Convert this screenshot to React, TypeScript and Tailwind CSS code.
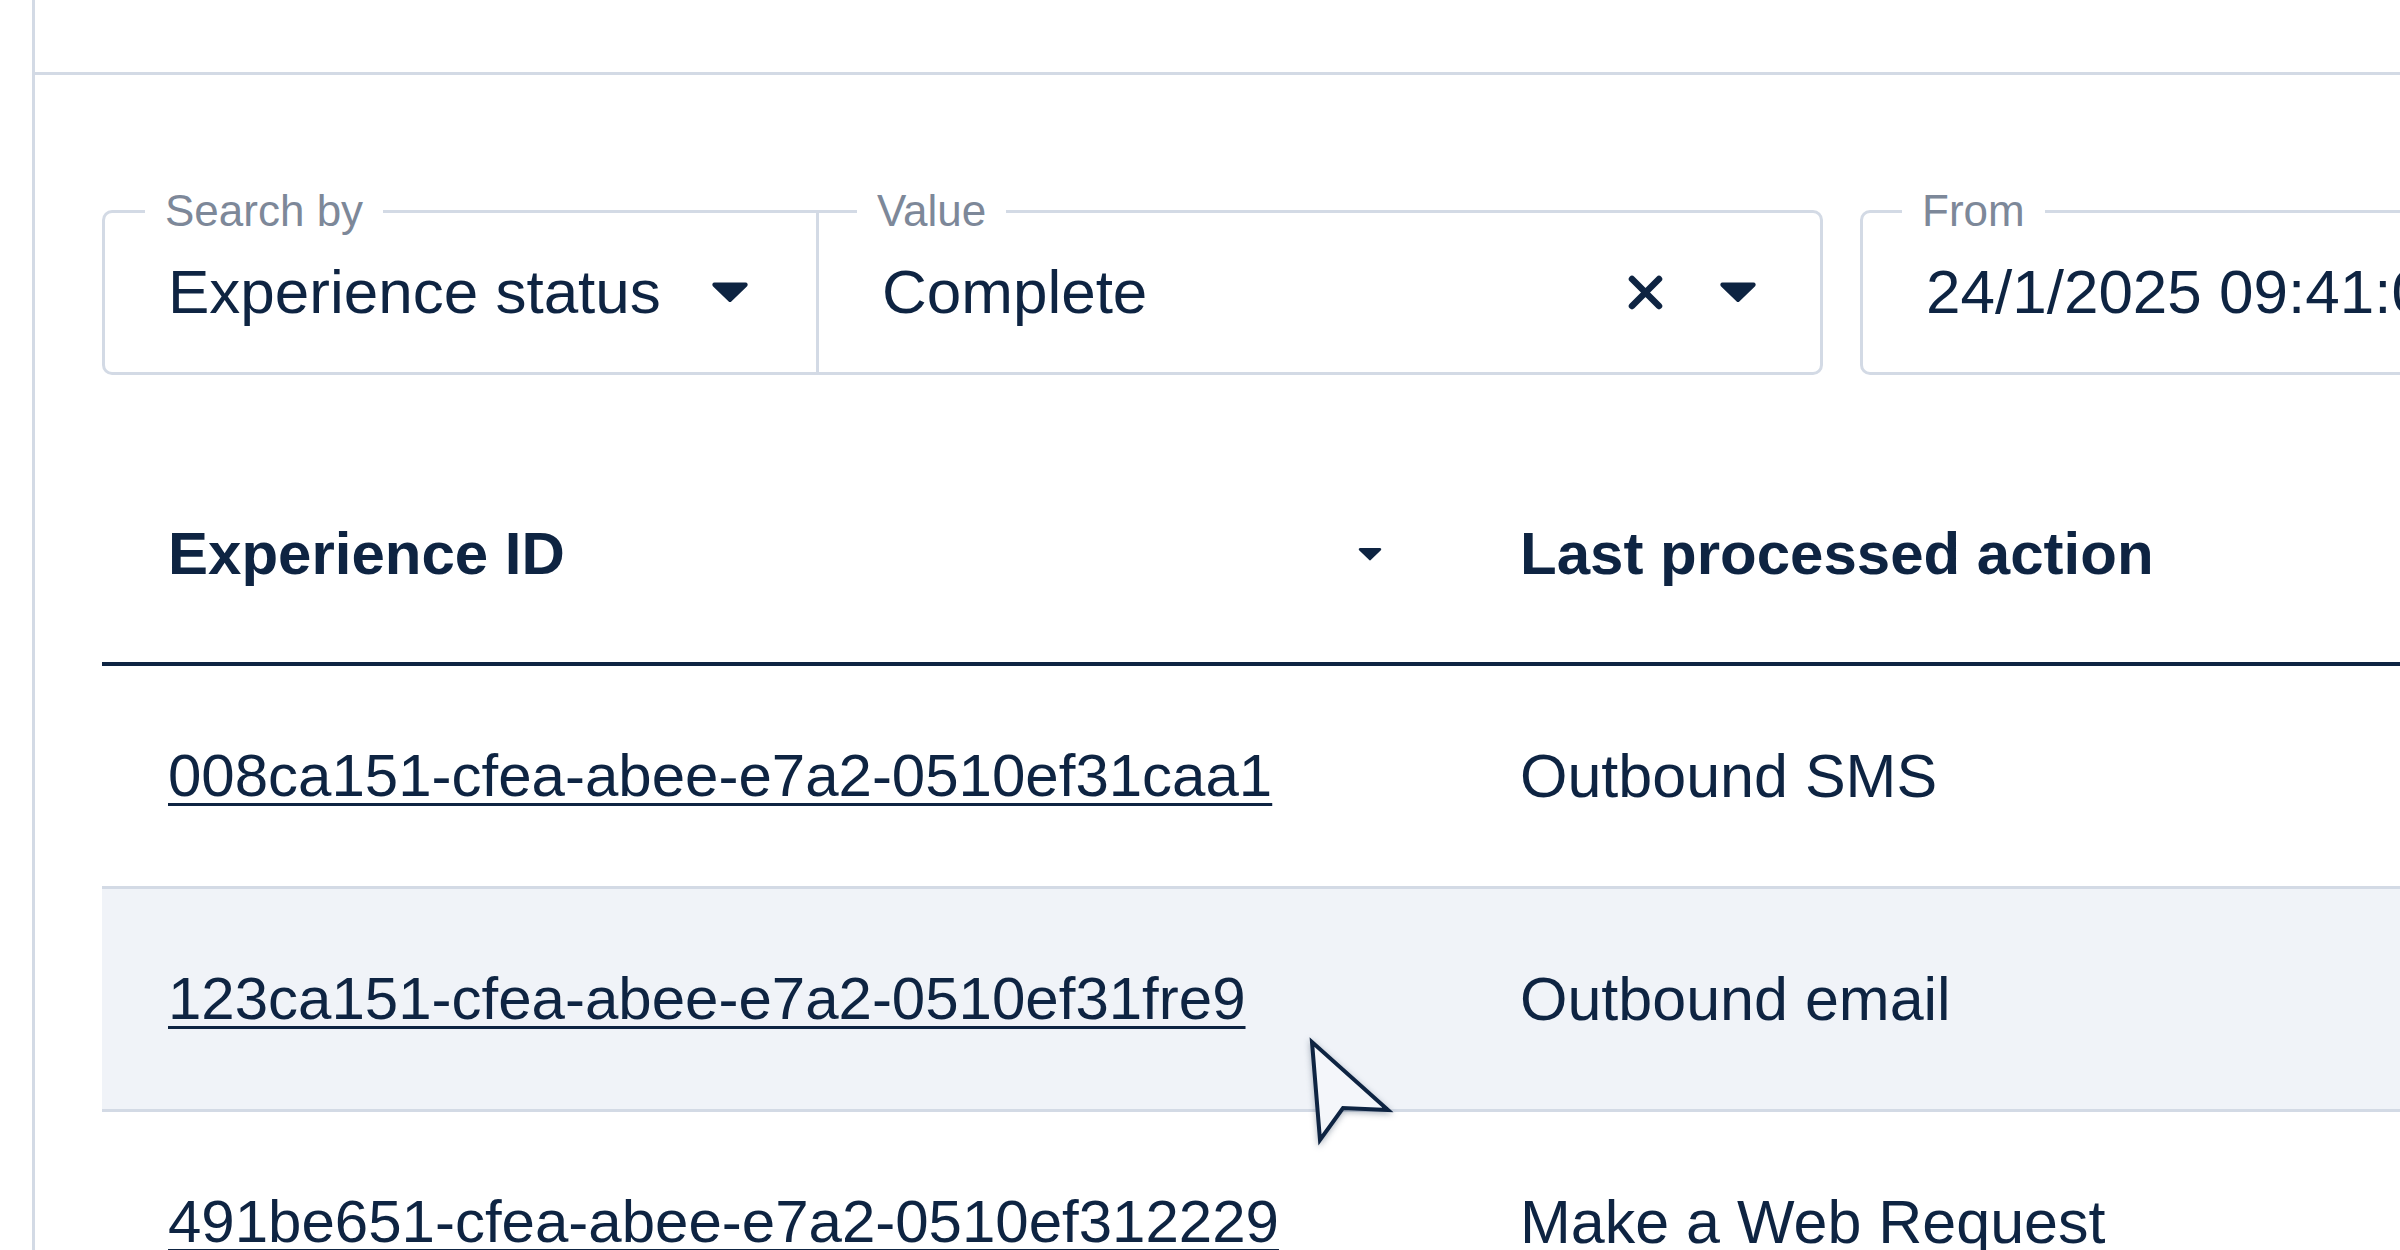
import React from 'react';

const rows = [
  { id: '008ca151-cfea-abee-e7a2-0510ef31caa1', action: 'Outbound SMS', hovered: false },
  { id: '123ca151-cfea-abee-e7a2-0510ef31fre9', action: 'Outbound email', hovered: true },
  { id: '491be651-cfea-abee-e7a2-0510ef312229', action: 'Make a Web Request', hovered: false },
];

function Caret({ className = '' }: { className?: string }) {
  return (
    <svg viewBox="0 0 38 22" className={className} fill="currentColor">
      <path d="M3.5 1.5 H34.5 a2.2 2.2 0 0 1 1.6 3.7 L20.6 20.2 a2.2 2.2 0 0 1 -3.2 0 L1.9 5.2 A2.2 2.2 0 0 1 3.5 1.5 Z" />
    </svg>
  );
}

function ClearIcon() {
  return (
    <svg viewBox="0 0 37 37" className="h-[37px] w-[37px]" fill="none" stroke="currentColor" strokeWidth={6.5} strokeLinecap="round">
      <path d="M5 5 L32 32 M32 5 L5 32" />
    </svg>
  );
}

function Cursor() {
  return (
    <svg
      viewBox="0 0 100 120"
      className="absolute left-[1300px] top-[1030px] h-[120px] w-[100px] drop-shadow-[0_2px_3px_rgba(14,36,66,0.35)]"
    >
      <path
        d="M12 12 L20 110 L43 78 L88 80 Z"
        fill="#f4f6fa"
        stroke="#0e2442"
        strokeWidth={4}
        strokeLinejoin="miter"
      />
    </svg>
  );
}

export default function App() {
  return (
    <div className="relative h-[1250px] w-[2400px] overflow-hidden bg-white font-['Liberation_Sans',Arial,sans-serif] text-[#0e2442]">
      <div className="ml-[32px] h-full border-l-[3px] border-[#d3dae5]">
        <div className="h-[75px] border-b-[3px] border-[#d3dae5]" />

        <div className="pl-[67px]">
          {/* filters */}
          <div className="mt-[116px] flex">
            <fieldset className="w-[714px] shrink-0 rounded-l-[10px] border-[3px] border-r-0 border-[#d3dae5]">
              <legend className="ml-[40px] px-[20px] text-[44px] leading-[40px] text-[#7d8899]">Search by</legend>
              <div className="flex items-center justify-between pb-[50px] pl-[63px] pr-[66px] pt-[31px]">
                <span className="text-[62px] leading-[60px]">Experience status</span>
                <Caret className="h-[22px] w-[40px]" />
              </div>
            </fieldset>

            <fieldset className="w-[1007px] shrink-0 rounded-r-[10px] border-[3px] border-[#d3dae5]">
              <legend className="ml-[38px] px-[20px] text-[44px] leading-[40px] text-[#7d8899]">Value</legend>
              <div className="flex items-center justify-between pb-[50px] pl-[63px] pr-[63px] pt-[31px]">
                <span className="text-[62px] leading-[60px]">Complete</span>
                <div className="flex items-center gap-[55px]">
                  <ClearIcon />
                  <Caret className="h-[22px] w-[38px]" />
                </div>
              </div>
            </fieldset>

            <fieldset className="ml-[37px] w-[800px] shrink-0 rounded-[10px] border-[3px] border-[#d3dae5]">
              <legend className="ml-[39px] px-[20px] text-[44px] leading-[40px] text-[#7d8899]">From</legend>
              <div className="flex items-center pb-[50px] pl-[63px] pt-[31px]">
                <span className="whitespace-nowrap text-[62px] leading-[60px]">24/1/2025 09:41:00</span>
              </div>
            </fieldset>
          </div>

          {/* table */}
          <div className="mt-[71px]">
            <div className="flex h-[220px] items-center border-b-[4px] border-[#0e2442]">
              <div className="flex w-[1352px] shrink-0 items-center justify-between pl-[66px] pr-[71px]">
                <span className="text-[60px] font-bold leading-[60px]">Experience ID</span>
                <Caret className="h-[14px] w-[26px]" />
              </div>
              <div className="whitespace-nowrap pl-[66px] text-[60px] font-bold leading-[60px]">Last processed action</div>
            </div>

            {rows.map((row) => (
              <div
                key={row.id}
                className={`flex h-[223px] items-center border-b-[3px] border-[#d3dae5] ${row.hovered ? 'bg-[#f0f3f8]' : ''}`}
              >
                <div className="w-[1352px] shrink-0 pl-[66px]">
                  <a className="whitespace-nowrap text-[60px] leading-[60px] underline decoration-[3px] underline-offset-[7px]">
                    {row.id}
                  </a>
                </div>
                <div className="whitespace-nowrap pl-[66px] text-[61px] leading-[60px]">{row.action}</div>
              </div>
            ))}
          </div>
        </div>
      </div>

      <Cursor />
    </div>
  );
}
